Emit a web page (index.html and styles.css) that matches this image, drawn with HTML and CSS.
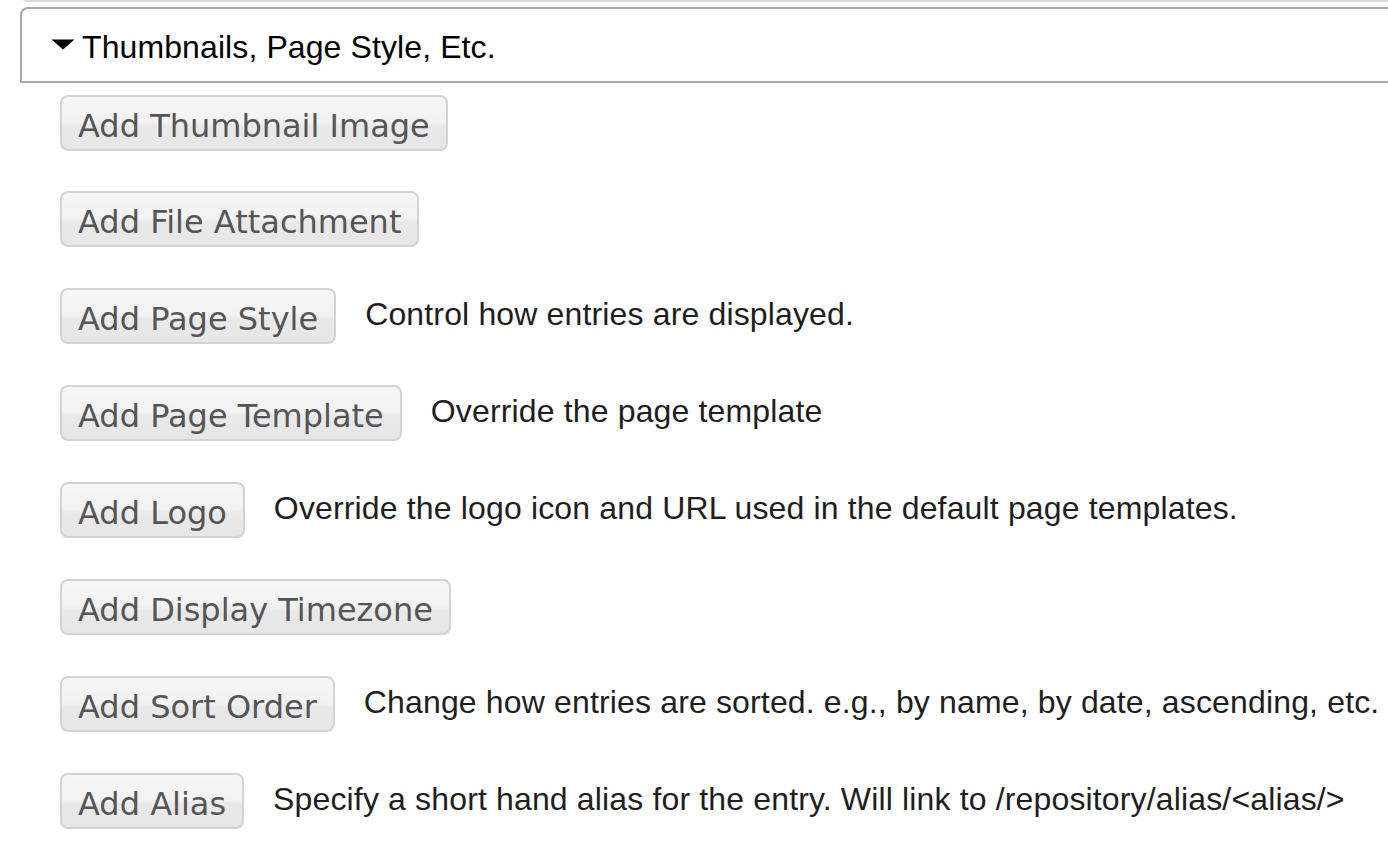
FILE: index.html
```html
<!DOCTYPE html>
<html>
<head>
<meta charset="utf-8">
<title>Thumbnails, Page Style, Etc.</title>
<link rel="stylesheet" href="styles.css">
</head>
<body>
<div class="prev-box"></div>
<div class="section-header">
  <svg class="toggle" width="24" height="11" viewBox="0 0 24 11"><polygon points="0.5,0.5 23.5,0.5 12,10.5" fill="#000"/></svg>
  <span class="section-title">Thumbnails, Page Style, Etc.</span>
</div>
<div class="section-body">
  <div class="row"><span class="btn">Add Thumbnail Image</span></div>
  <div class="row"><span class="btn">Add File Attachment</span></div>
  <div class="row"><span class="btn">Add Page Style</span><span class="desc">Control how entries are displayed.</span></div>
  <div class="row"><span class="btn">Add Page Template</span><span class="desc">Override the page template</span></div>
  <div class="row"><span class="btn">Add Logo</span><span class="desc">Override the logo icon and URL used in the default page templates.</span></div>
  <div class="row"><span class="btn">Add Display Timezone</span></div>
  <div class="row"><span class="btn">Add Sort Order</span><span class="desc">Change how entries are sorted. e.g., by name, by date, ascending, etc.</span></div>
  <div class="row"><span class="btn">Add Alias</span><span class="desc">Specify a short hand alias for the entry. Will link to /repository/alias/&lt;alias/&gt;</span></div>
</div>
</body>
</html>
```

FILE: styles.css
```css
html, body {
  margin: 0;
  padding: 0;
  background: #fff;
  overflow: hidden;
}
body {
  font-family: "Liberation Sans", Arial, sans-serif;
  font-size: 32px;
  color: #000;
  width: 1388px;
  height: 850px;
}
.prev-box {
  height: 10px;
  margin: -10px -20px 0 20px;
  border: 2px solid #d9d9d9;
  border-top: 0;
  border-bottom-left-radius: 8px;
}
.section-header {
  display: flex;
  align-items: center;
  height: 72px;
  margin: 5px -20px 0 20px;
  padding-left: 29px;
  border: 2px solid #aaa;
  border-right: 0;
  border-top-left-radius: 8px;
  box-sizing: content-box;
}
.toggle {
  display: block;
  margin-right: 7px;
  margin-top: -1px;
}
.section-title {
  line-height: 36px;
  margin-top: 4px;
  letter-spacing: 0.1px;
}
.section-body {
  padding: 11.5px 0 0 60px;
}
.row {
  display: flex;
  align-items: flex-start;
  margin-bottom: 40.86px;
}
.btn {
  display: block;
  flex: none;
  font-family: "DejaVu Sans", Verdana, sans-serif;
  font-size: 32px;
  line-height: 45px;
  padding: 7px 16px 0;
  color: #555;
  border: 2px solid #d3d3d3;
  border-radius: 8px;
  background: linear-gradient(#f6f6f6 0%, #f2f2f2 48%, #e9e9e9 56%, #e6e6e6 100%);
}
.desc {
  margin-left: 29px;
  margin-top: 8px;
  color: #1e1e1e;
  white-space: nowrap;
  letter-spacing: 0.15px;
}
```
